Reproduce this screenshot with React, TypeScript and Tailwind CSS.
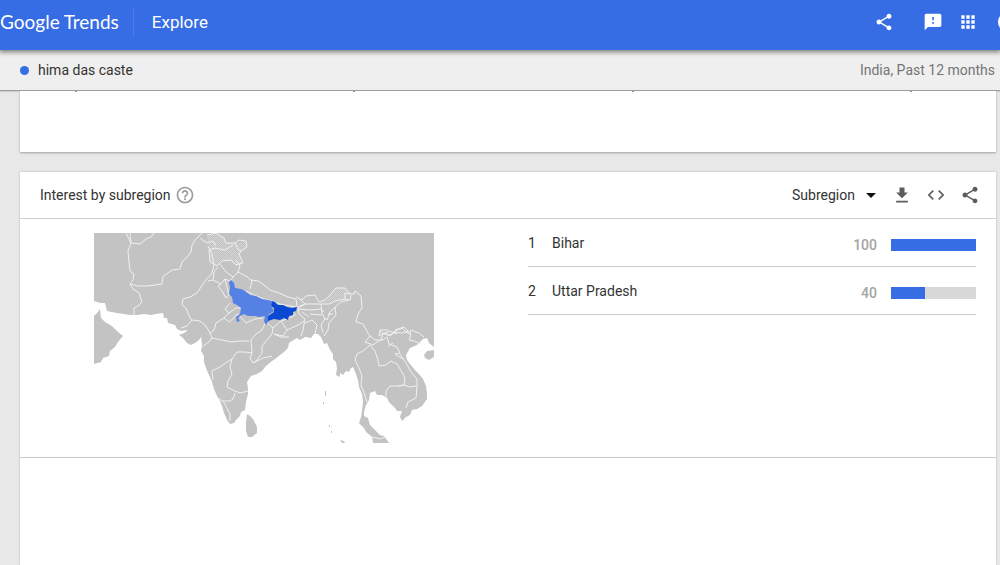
import React from "react";
import { MdApps, MdCode, MdFeedback, MdHelpOutline, MdShare } from "react-icons/md";

const regions = [
  { rank: 1, name: "Bihar", value: 100 },
  { rank: 2, name: "Uttar Pradesh", value: 40 },
];

const ticks = [1, 2, 3, 4];

const land = [
  // mainland
  "M94 233H434V347L429 343 427 338 423 339 417 345 410 348 406 355 407 360 410 364 414 369 419 374 423 379 426 386 427 393 427 399 422 406 417 409 412 410 410 415 406 417 402 421 400 417 402 411 397 411 395 408 392 405 389 402 387 398 382 395 377 395 375 391 370 393 369 400 366 405 364 412 364 416 368 418 370 425 375 430 380 435 384 436 389 443H373L372 437 366 432 364 428 359 423 361 417 362 411 363 402 362 394 359 387 358 380 356 374 353 367 351 368 349 372 346 371 343 375 340 373 340 377 336 375 337 368 336 362 333 359 333 354 330 350 327 343 324 344 321 337 318 334 314 334 311 338 305 337 300 340 297 338 292 341 289 343 288 348 284 352 280 355 275 359 272 361 266 366 262 371 257 374 251 376 247 382 248 388 248 394 246 402 245 410 241 412 240 416 236 420 234 423 230 424 227 420 224 413 222 406 220 401 217 396 214 389 212 382 209 375 206 368 204 362 204 356 201 351 202 344 201 337 199 340 195 343 191 345 187 343 183 338 179 335 184 333 187 331 187 330 181 331 177 329 175 325 168 323 167 318 164 318 163 313 156 314 151 315 144 314 137 315 130 315 124 314 117 313 107 311 105 303 100 303 94 301Z",
  // arabia
  "M94 316L98 312 100 309 101 318 105 322 112 326 118 332 123 336 118 342 115 347 110 351 109 356 103 358 101 362 94 364Z",
  // sri lanka
  "M247 414L250 416 253 419 257 427 257 433 252 437 248 437 246 431 246 423Z",
  // hainan
  "M424 355L427 351 434 350V357L429 360 425 358Z",
  // andaman and sumatra
  "M325 391h1v5h-1zM323 402h1v2h-1zM329 425h1v2h-1zM331 431h1v2h-1zM340 440l4 1 1 2h-3z",
];

const borders = [
  // iran, afghanistan, pakistan
  "M130 233L131 243 128 251 129 262 130 271 134 274 133 280 130 284 138 286 148 286 162 284 163 276 168 273 172 270 180 269 182 262 187 257 191 252 192 245 195 240 202 233",
  "M130 284L133 289 139 293 142 302 138 306 134 308 134 315M126 233L131 243 140 244 146 239 151 237 154 233",
  "M200 238L207 243 213 241 216 246M208 246L212 254 214 265 212 273 205 281 197 293 190 297 183 299 182 305 186 308 190 318 192 320 187 326 181 328",
  // kashmir
  "M207 235L216 233 224 238 226 243 235 243 239 240 246 241 247 247 241 251 239 254 243 263 236 265 231 260 222 261 217 266 210 262 209 250 215 248 225 250 233 245",
  "M235 243L238 249 241 251",
  // northern states
  "M220 264L226 272 233 277 238 272 240 266 236 260M233 277L230 281 225 279 221 284 213 280 208 281M213 280L214 272 218 267",
  "M225 279L227 287 229 295 226 298 222 291 218 286 221 284M238 272L246 276 252 281 250 289",
  // nepal and bhutan
  "M251 280L258 281 264 285 270 290 279 293 288 297 296 299 297 306M246 291L254 295 264 299 272 301 280 304 290 306 297 307",
  "M296 297L302 300 306 296 315 295 319 302M298 307L305 304 320 304",
  "M300 299L305 304 300 307M319 302L325 300 330 295 336 288 345 288 350 294 354 294 355 291 361 296 362 308 358 314 356 322 363 324 368 333 370 336",
  "M320 304L329 304 336 301 345 299 350 300 351 295M345 299L345 293 350 294M349 300L341 302 335 307 330 312 327 320 324 318",
  "M335 307L336 315 329 323 328 330 324 336M328 314L333 314M298 309L311 310 321 309 324 312M310 314L322 315M321 304L322 313 325 319 321 325 323 333",
  "M298 307L299 314 305 319 303 330 301 336M302 312L309 317M305 323L312 320 317 325 315 334",
  // rajasthan, gujarat, madhya pradesh
  "M230 303L225 309 229 313 236 308 241 308M229 313L224 318 229 322 234 318 237 314 240 316M192 320L200 321 206 326 210 333 214 330 216 323 224 318",
  "M210 333L212 338 222 340 232 342 239 341 249 341M202 347L210 341 212 338M240 316L246 323 255 319 263 318M266 322L273 328 281 321 290 318",
  "M266 322L262 330 256 334 251 340 252 353M273 328L272 334 266 341 262 346 262 353 257 360 253 363 250 358 252 353 245 352 237 352 232 359 227 362 220 367 212 371 213 380",
  "M281 321L287 330 283 336 274 334 281 337 289 337M290 318L296 314M287 330L298 325 304 321M253 363L263 358 272 356",
  // southern states
  "M232 359L230 367 232 374 228 381 227 387 235 391 240 393 248 391M235 393L233 399 230 401 222 401 217 397M223 401L227 408 230 414 230 421",
  // south east asia
  "M370 336L365 342 373 345 377 342 381 340 383 333 390 336 395 332 402 333 409 331M370 336L375 340 383 340 387 337 389 344 397 347 400 353 395 354 403 359",
  "M380 330L379 336 384 333 390 335 395 331 402 328 406 332 411 335 409 340 414 341 421 344M380 330L388 330M395 330L404 327 411 334",
  "M370 345L363 351 357 354 355 360 359 368 362 376 361 385 364 393 367 402M370 345L375 351 378 360 379 366 386 365 391 361 397 364 402 372 405 378 404 385 398 386",
  "M400 354L406 363 411 372 417 379 417 386 416 398 408 402 406 408M404 385L398 386 390 386 386 391 386 397M404 385L410 387 416 386M372 437L380 439 385 437M388 346L393 343",
  "M410 333L411 330 419 333 424 337M380 331L384 334 389 331 397 334",
];

function SubregionMap() {
  return (
    <svg viewBox="94 233 340 210" className="w-full max-w-[340px]" role="img" aria-label="Map of interest by subregion">
      <defs>
        <pattern id="disputed" width="2" height="2" patternUnits="userSpaceOnUse">
          <path d="M0 0h1v1H0zM1 1h1v1H1z" fill="#d2d2d2" />
        </pattern>
      </defs>
      <g fill="#c3c3c3">
        {land.map((d) => (
          <path d={d} key={d} />
        ))}
      </g>
      <path
        d="M207 235L216 233 224 238 226 243 235 243 246 241 247 247 241 251 239 254 243 263 236 265 231 260 222 261 217 266 210 262 209 250Z"
        fill="url(#disputed)"
      />
      <path d="M320 304L325 300 330 295 336 288 345 288 350 294 345 299 336 301Z" fill="url(#disputed)" />
      <g fill="none" stroke="#f1f1f1" strokeWidth="1" strokeLinejoin="round">
        {borders.map((d) => (
          <path d={d} key={d} />
        ))}
      </g>
      <path
        d="M231 280L234 283 235 288 241 289 245 291 250 295 256 296 262 299 268 300 272 301 271 306 274 311 268 315 269 320 266 325 264 321 265 316 259 317 255 316 248 316 244 314 240 316 238 318 240 321 237 322 236 317 240 314 241 308 237 305 233 303 232 297 229 294 230 288 229 282Z"
        fill="#5681e4"
      />
      <path
        d="M272 301L275 302 278 305 283 305 287 307 292 308 297 307 296 311 293 312 293 315 289 316 288 320 284 318 280 320 274 319 268 321 268 316 274 312 274 308 271 306Z"
        fill="#0b49d3"
      />
    </svg>
  );
}

export default function App() {
  return (
    <div className="flex min-h-screen flex-col overflow-hidden bg-[#e8e8e8] font-[Roboto,sans-serif] text-sm text-[#333]">
      <header className="relative z-10 h-[50px] bg-[#366de4] text-white shadow-[0_1px_5px_1px_#777]">
        <div className="flex h-11 items-center overflow-hidden">
          <a href="#" className="flex gap-1 font-[Lato,sans-serif] text-[19px] leading-6">
            <span>Google</span>
            <span>Trends</span>
          </a>
          <div className="ml-3.5 h-7 w-px bg-[#4c7de8]" />
          <a href="#" className="ml-[18px] text-[17px]">
            Explore
          </a>
          <div className="-mr-[18px] ml-auto flex items-center">
            <button aria-label="Share" className="mr-[29px]">
              <MdShare size={20} />
            </button>
            <button aria-label="Send feedback" className="mr-[15px]">
              <MdFeedback size={20} />
            </button>
            <button aria-label="Apps" className="mr-5">
              <MdApps size={20} />
            </button>
            <button aria-label="Account" className="size-5 rounded-full bg-white" />
          </div>
        </div>
      </header>

      <div className="flex h-[41px] items-center border-b border-[#9c9c9c] bg-[#efefef] pr-[5px] pl-5 shadow-[0_1px_1px_#d0d0d0]">
        <span className="mr-[9px] size-[9px] rounded-full bg-[#366de4]" />
        <span>hima das caste</span>
        <span className="ml-auto text-[#757575]">India, Past 12 months</span>
      </div>

      <main className="mr-1 ml-5 flex grow flex-col gap-5">
        <section className="flex h-[61px] justify-between bg-white pr-[84px] pl-[55px] shadow-[0_1px_2px_#a0a0a0]">
          {ticks.map((tick) => (
            <div key={tick} className="h-px w-0.5 bg-[#999]" />
          ))}
        </section>

        <section className="flex grow flex-col bg-white shadow-[0_0_2px_#b0b0b0]">
          <div className="flex h-[47px] items-center border-b border-[#d0d0d0] pr-4 pl-5">
            <h2>Interest by subregion</h2>
            <button aria-label="Help" className="ml-1 text-[#9b9b9b]">
              <MdHelpOutline size={20} />
            </button>
            <div className="ml-auto flex items-center">
              <div className="relative mr-4">
                <select aria-label="Resolution" className="w-[84px] appearance-none bg-transparent">
                  <option>Subregion</option>
                </select>
                <svg viewBox="0 0 10 5" className="pointer-events-none absolute top-2 right-0 h-[5px] w-2.5">
                  <path d="M0 0h10L5 5z" fill="#111" />
                </svg>
              </div>
              <div className="flex items-center gap-3.5 text-[#5c5c5c]">
                <button aria-label="Download CSV">
                  <svg viewBox="0 0 24 24" className="size-5" fill="currentColor">
                    <path d="M19 9h-4V3H9v6H5l7 7 7-7zM5 19v2h14v-2H5z" />
                  </svg>
                </button>
                <button aria-label="Embed">
                  <MdCode size={20} />
                </button>
                <button aria-label="Share chart">
                  <MdShare size={20} />
                </button>
              </div>
            </div>
          </div>

          <div className="grid grid-cols-2 border-b border-[#cacaca]">
            <div className="flex justify-center py-3.5">
              <SubregionMap />
            </div>
            <ol className="px-5">
              {regions.map((region) => (
                <li key={region.rank} className="flex h-12 items-center border-b border-[#cacaca]">
                  <span className="w-6">{region.rank}</span>
                  <span>{region.name}</span>
                  <div className="ml-auto flex items-center gap-3.5 pt-1">
                    <span className="font-medium text-[#a3a3a3]">{region.value}</span>
                    <div className="h-3 w-[85px] bg-[#d8d8d8]">
                      <div className="h-full bg-[#366de4]" style={{ width: `${region.value}%` }} />
                    </div>
                  </div>
                </li>
              ))}
            </ol>
          </div>
        </section>
      </main>
    </div>
  );
}
